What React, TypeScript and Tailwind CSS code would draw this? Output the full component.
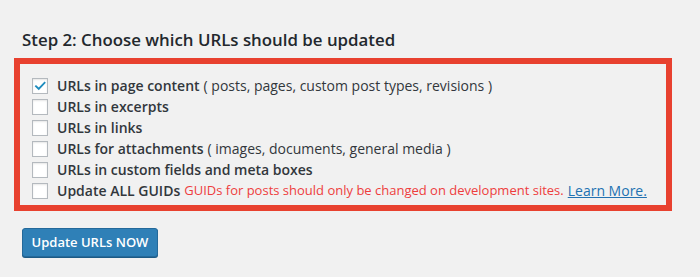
const options = [
  { label: 'URLs in page content', note: '( posts, pages, custom post types, revisions )', checked: true },
  { label: 'URLs in excerpts' },
  { label: 'URLs in links' },
  { label: 'URLs for attachments', note: '( images, documents, general media )' },
  { label: 'URLs in custom fields and meta boxes' },
];

function Box({ checked }: { checked?: boolean }) {
  return (
    <span className="w-4 h-4 shrink-0 bg-white border border-[#b4b9be] shadow-[inset_0_1px_2px_rgba(0,0,0,0.1)] flex items-center justify-center">
      {checked && (
        <svg viewBox="0 0 16 16" className="w-[15px] h-[15px]" fill="#1e8cbe">
          <path d="M13.2 3.4 6.6 10.3 3.4 7.3 1.9 8.8l4.7 4.6 8.1-8.5z" />
        </svg>
      )}
    </span>
  );
}

export default function App() {
  return (
    <div className="w-[700px] h-[277px] bg-[#f1f1f1] text-[#32373c] font-['Open_Sans',sans-serif]">
      <h3 className="pt-[28px] pl-[22px] text-[16.85px] leading-[24px] font-semibold text-[#23282d]">
        Step 2: Choose which URLs should be updated
      </h3>
      <div className="ml-[14px] mt-[6px] w-[658px] border-[6px] border-[#e8412f] pt-[11px] pb-[4px] pl-[12px]">
        {options.map(o => (
          <label key={o.label} className="flex items-center h-[21px] text-[14px] whitespace-nowrap">
            <Box checked={o.checked} />
            <span className="ml-[9px] font-semibold">{o.label}</span>
            {o.note && <span className="ml-[4px]">{o.note}</span>}
          </label>
        ))}
        <label className="flex items-center h-[21px] text-[14px] whitespace-nowrap">
          <Box />
          <span className="ml-[9px] font-semibold">Update ALL GUIDs</span>
          <span className="ml-[4px] text-[13px] text-[#ee3d3d]">GUIDs for posts should only be changed on development sites.</span>
          <a className="ml-[4px] text-[#2271b1] underline">Learn More.</a>
        </label>
      </div>
      <button className="ml-[22px] mt-[17px] w-[136px] h-[29px] rounded-[3px] bg-[#2f80b7] border border-[#24699a] shadow-[0_1px_0_#1c5a85] text-white text-[13px] font-semibold">
        Update URLs NOW
      </button>
    </div>
  );
}
